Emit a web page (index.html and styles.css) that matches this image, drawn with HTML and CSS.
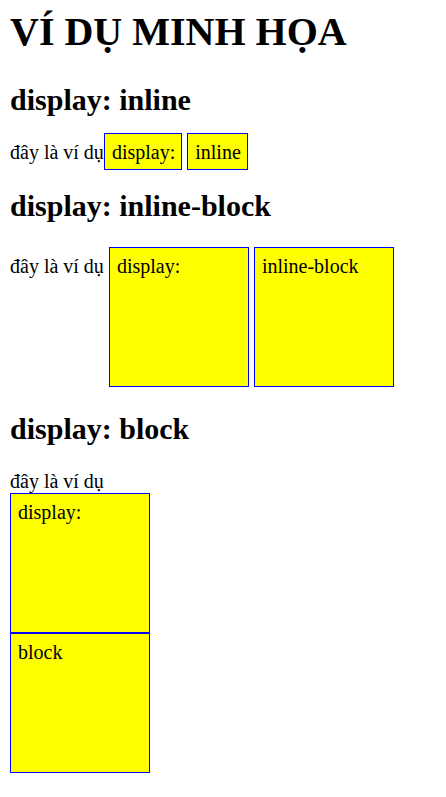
FILE: index.html
```html
<!DOCTYPE html>
<html lang="vi">
<head>
<meta charset="utf-8">
<title>Ví dụ minh họa</title>
<link rel="stylesheet" href="styles.css">
</head>
<body>
<h1>VÍ DỤ MINH HỌA</h1>
<h2>display: inline</h2>
<div class="example">đây là ví dụ<span class="inline">display:</span> <span class="inline">inline</span></div>
<h2>display: inline-block</h2>
<div class="example">đây là ví dụ <span class="inline-block">display:</span> <span class="inline-block">inline-block</span></div>
<h2>display: block</h2>
<div class="example">đây là ví dụ <span class="block">display:</span> <span class="block">block</span></div>
</body>
</html>
```

FILE: styles.css
```css
body {
  margin: 8px 10px;
  background: #fff;
  color: #000;
  font-family: "Liberation Serif", "Times New Roman", serif;
  font-size: 20px;
  line-height: 23px;
}

h1 {
  margin: 0 0 28px;
  font-size: 40px;
  line-height: 47px;
}

h2 {
  margin: 25px 0 24px;
  font-size: 30px;
  line-height: 34px;
}

.inline,
.inline-block,
.block {
  box-sizing: border-box;
  padding: 7px 6px 6px 7px;
  border: 1px solid #00f;
  background: #ff0;
}

.inline-block {
  display: inline-block;
  width: 140px;
  height: 140px;
}

.block {
  display: block;
  width: 140px;
  height: 140px;
}
```
